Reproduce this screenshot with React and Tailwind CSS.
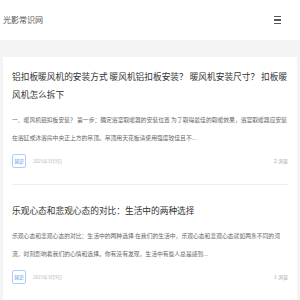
const posts = [
  {
    title: '铝扣板暖风机的安装方式 暖风机铝扣板安装？ 暖风机安装尺寸？ 扣板暖风机怎么拆下',
    summary:
      '一、暖风机铝扣板安装？ 第一步：确定浴室取暖器的安装位置 为了取得最佳的取暖效果，浴室取暖器应安装在浴缸或沐浴房中央正上方的吊顶。吊顶用天花板请使用强度较佳且不...',
    date: '2025年3月9日',
    views: 2,
  },
  {
    title: '乐观心态和悲观心态的对比：生活中的两种选择',
    summary:
      '乐观心态和悲观心态的对比：生活中的两种选择 在我们的生活中，乐观心态和悲观心态就如两条不同的河流，时刻影响着我们的心情和选择。你有没有发现，生活中有些人总是感到...',
    date: '2025年3月9日',
    views: 1,
  },
];

const PostItem = ({ post, first }) => (
  <div className={first ? 'pt-[11px]' : 'pt-[17px]'}>
    <h2 className="text-[8.7px] leading-[18px] text-[#333]">{post.title}</h2>
    <p className="mt-[7px] text-[5.8px] leading-[18px] text-[#666]">{post.summary}</p>
    <div className="mt-[7px] flex items-center h-[14px]">
      <span className="w-[14px] h-[14px] flex items-center justify-center border border-[#a9d0fb] rounded-[2px] text-[4.6px] text-[#4a90e2]">
        知识
      </span>
      <span className="ml-[7px] text-[4.6px] text-[#b5b5b5]">{post.date}</span>
      <span className="ml-auto text-[5px] text-[#a5a5a5]">{post.views} 浏览</span>
    </div>
    <div className="mt-[16px] border-b border-[#eeeeee]" />
  </div>
);

const App = () => {
  return (
    <div className="min-h-[300px] bg-[#f4f4f4]" style={{ fontFamily: '"Noto Sans CJK SC", "Noto Sans", sans-serif' }}>
      <header className="h-[40px] bg-white flex items-center justify-between pl-[3px] pr-[19px]">
        <span className="text-[8px] text-[#555]">光影常识网</span>
        <button className="flex flex-col gap-[2px] w-[7px]">
          <span className="h-[1.5px] bg-[#555]" />
          <span className="h-[1.5px] bg-[#555]" />
          <span className="h-[1.5px] bg-[#555]" />
        </button>
      </header>
      <main className="mt-[17px] mx-[3px] bg-white px-[9px]">
        {posts.map((post, i) => (
          <PostItem key={i} post={post} first={i === 0} />
        ))}
      </main>
    </div>
  );
};

export default App;
